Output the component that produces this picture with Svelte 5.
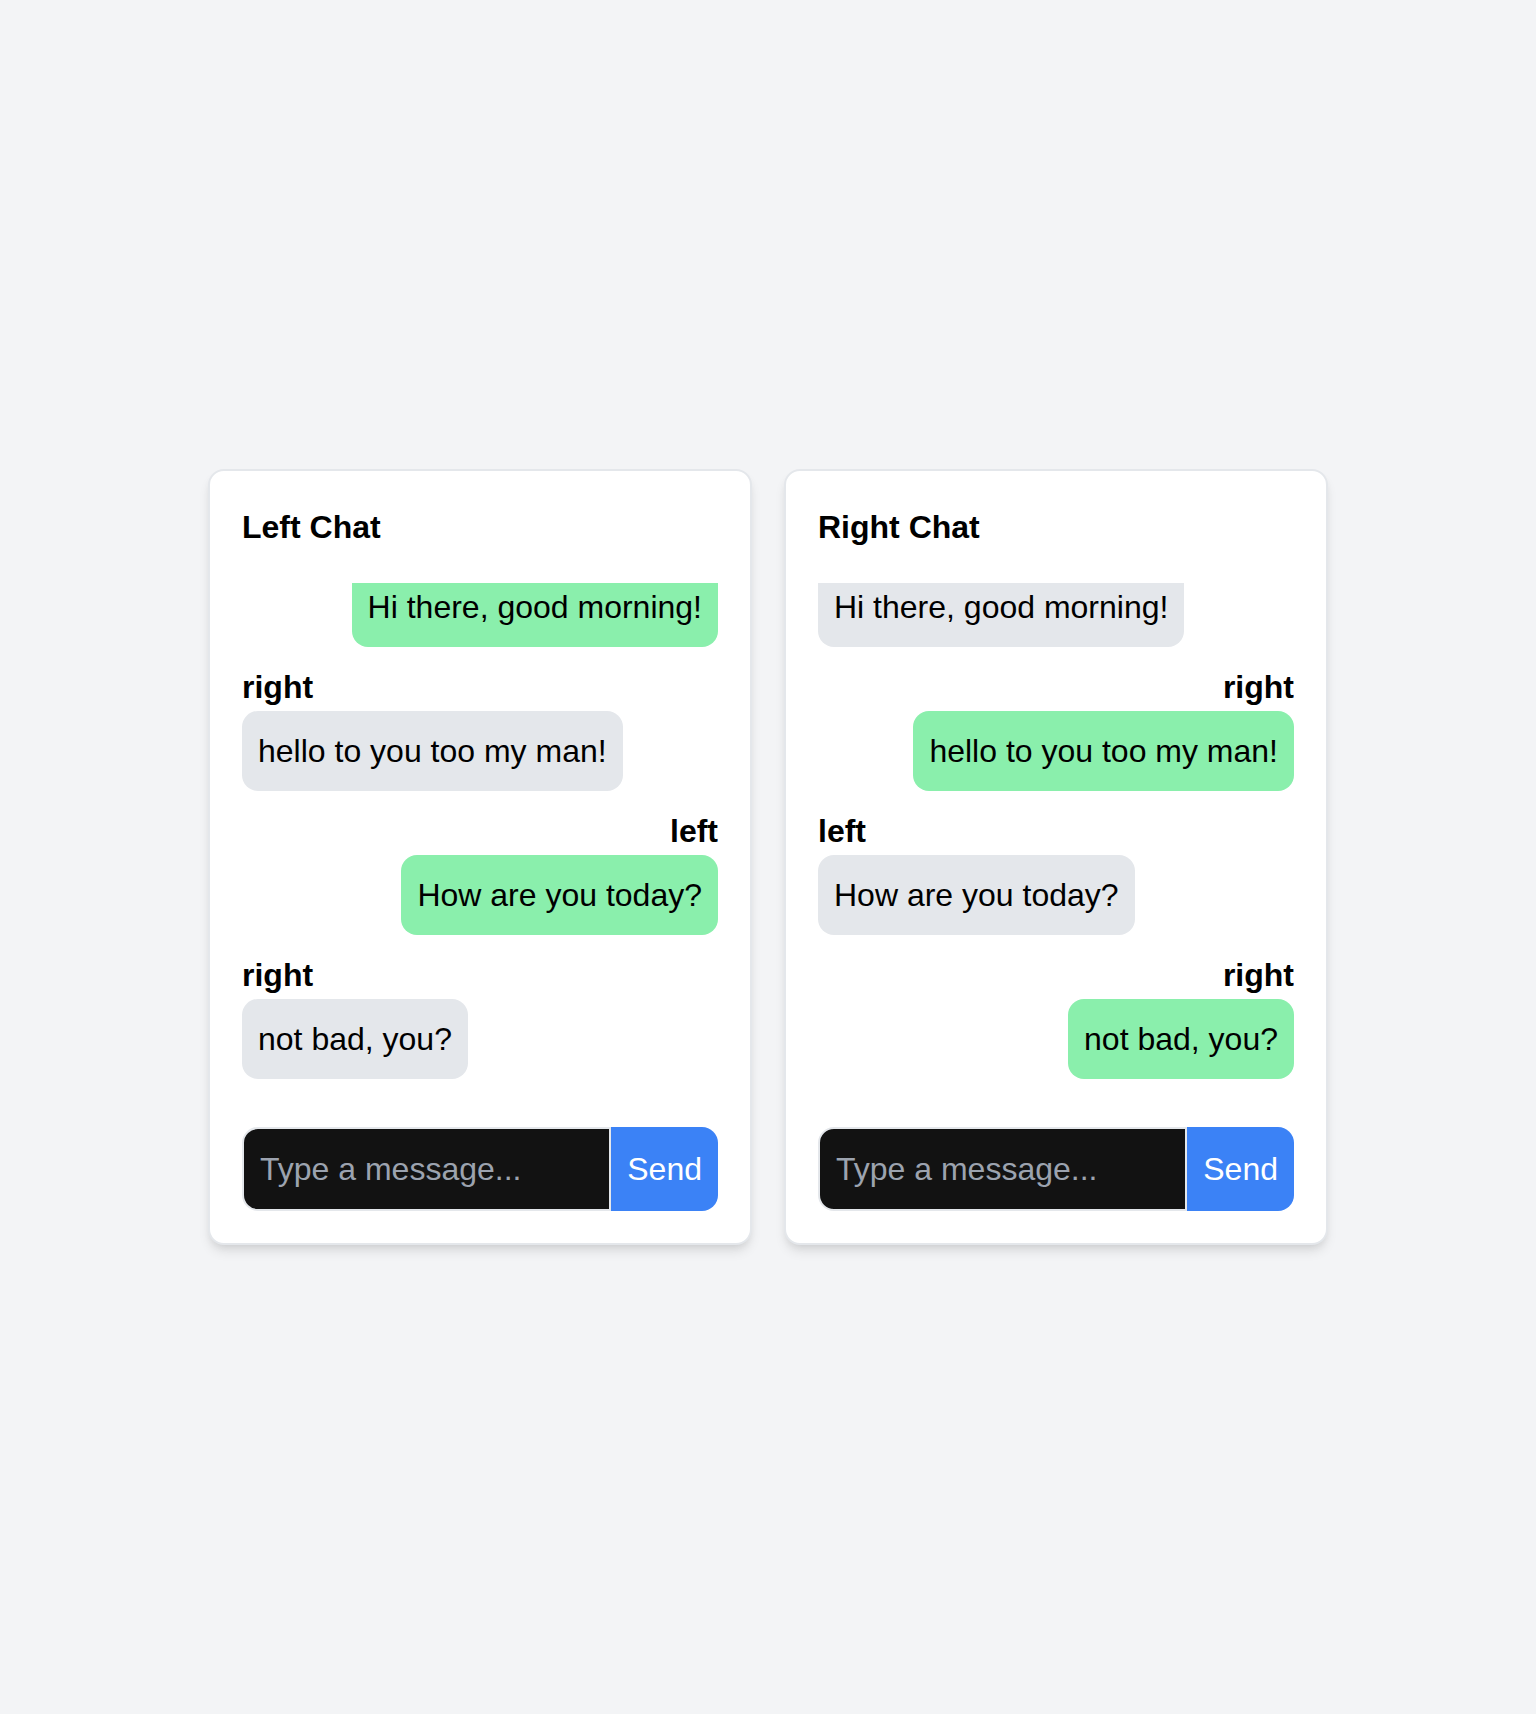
<script>
  // The history is scrolled to its end, so the oldest author label is out of view.
  const messages = [
    { from: 'left', text: 'Hi there, good morning!', labelled: false },
    { from: 'right', text: 'hello to you too my man!', labelled: true },
    { from: 'left', text: 'How are you today?', labelled: true },
    { from: 'right', text: 'not bad, you?', labelled: true }
  ];
  const chats = [
    { side: 'left', title: 'Left Chat' },
    { side: 'right', title: 'Right Chat' }
  ];
</script>

<main>
  {#each chats as chat}
    <section class="card">
      <h2>{chat.title}</h2>
      <div class="messages">
        {#each messages as m}
          <div class="message" class:own={m.from === chat.side}>
            {#if m.labelled}
              <strong>{m.from}</strong>
            {/if}
            <div class="bubble">{m.text}</div>
          </div>
        {/each}
      </div>
      <form>
        <input type="text" placeholder="Type a message..." />
        <button type="button">Send</button>
      </form>
    </section>
  {/each}
</main>

<style>
  :global(body) {
    background: #f3f4f6;
  }
  main {
    box-sizing: border-box;
    min-height: 1714px;
    display: flex;
    align-items: center;
    justify-content: center;
    gap: 32px;
    font-family: 'Liberation Sans', Arial, sans-serif;
    font-size: 32px;
    line-height: 48px;
    color: #000;
  }
  .card {
    box-sizing: border-box;
    width: 544px;
    padding: 32px;
    background: #fff;
    border: 2px solid #e4e7eb;
    border-radius: 16px;
    box-shadow: 0 8px 12px -2px rgba(0, 0, 0, 0.1), 0 4px 8px -4px rgba(0, 0, 0, 0.1);
  }
  h2 {
    margin: 0 0 32px;
    font-size: 32px;
    line-height: 48px;
    font-weight: 700;
  }
  .messages {
    display: flex;
    flex-direction: column;
    justify-content: flex-end;
    gap: 16px;
    height: 512px;
    margin-bottom: 32px;
    padding-bottom: 16px;
    box-sizing: border-box;
    overflow: hidden;
  }
  .message {
    display: flex;
    flex-direction: column;
    align-items: flex-start;
    flex: none;
  }
  .own {
    align-items: flex-end;
  }
  strong {
    height: 48px;
  }
  .bubble {
    padding: 16px;
    border-radius: 16px;
    background: #e4e7eb;
  }
  .own .bubble {
    background: #8aefac;
  }
  form {
    display: flex;
    margin: 0;
  }
  input {
    box-sizing: border-box;
    flex: 1;
    min-width: 0;
    height: 84px;
    margin: 0;
    padding: 16px;
    border: 2px solid #e4e7eb;
    border-radius: 16px 0 0 16px;
    background: #121212;
    color: #fff;
    font: inherit;
  }
  input::placeholder {
    color: #9ca3af;
    opacity: 1;
  }
  button {
    margin: 0;
    padding: 16px;
    border: 0;
    border-radius: 0 16px 16px 0;
    background: #3b82f6;
    color: #fff;
    font: inherit;
  }
</style>
